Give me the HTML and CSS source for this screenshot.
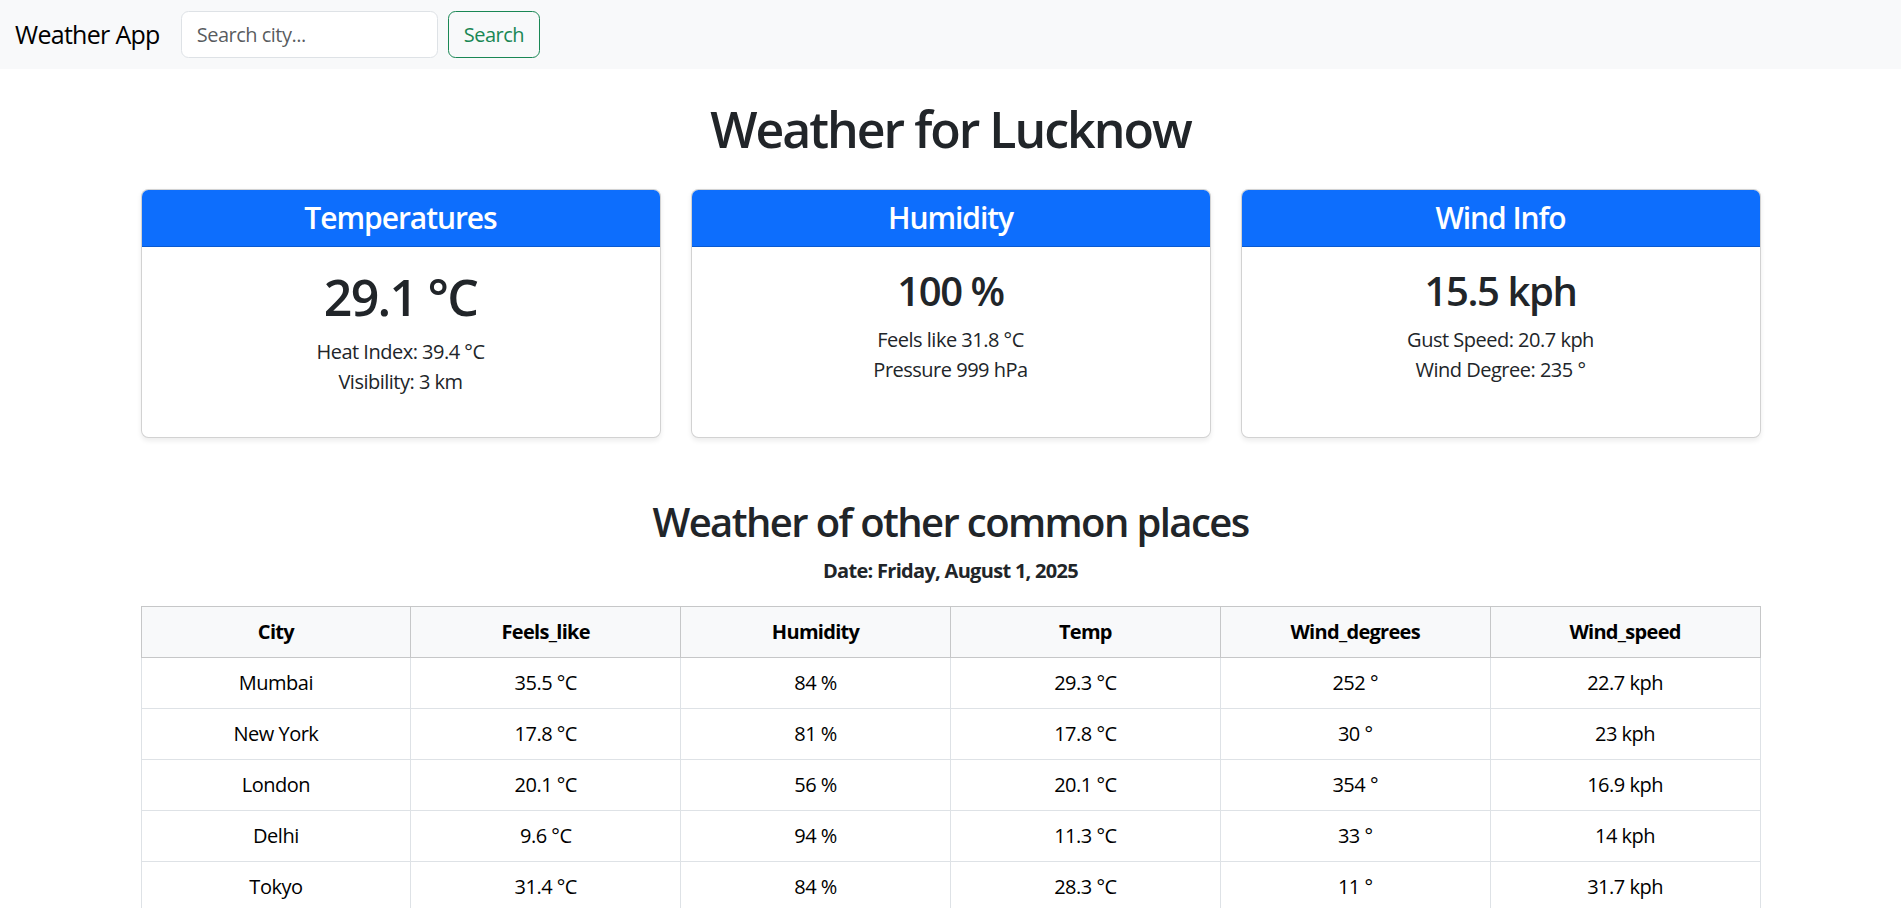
FILE: index.html
```html
<!DOCTYPE html>
<html lang="en">
<head>
<meta charset="utf-8">
<title>Weather App</title>
<link rel="stylesheet" href="styles.css">
</head>
<body>
<nav class="navbar">
  <a class="brand" href="#">Weather App</a>
  <form class="search">
    <input class="search-input" type="search" placeholder="Search city...">
    <button class="search-btn" type="button">Search</button>
  </form>
</nav>

<main class="container">
  <h1 class="page-title">Weather for Lucknow</h1>

  <div class="cards">
    <div class="card">
      <div class="card-header"><h4>Temperatures</h4></div>
      <div class="card-body">
        <h1 class="value-lg">29.1 °C</h1>
        <p class="details">Heat Index: 39.4 °C<br>Visibility: 3 km</p>
      </div>
    </div>
    <div class="card">
      <div class="card-header"><h4>Humidity</h4></div>
      <div class="card-body">
        <h2 class="value-md">100 %</h2>
        <p class="details">Feels like 31.8 °C<br>Pressure 999 hPa</p>
      </div>
    </div>
    <div class="card">
      <div class="card-header"><h4>Wind Info</h4></div>
      <div class="card-body">
        <h2 class="value-md">15.5 kph</h2>
        <p class="details">Gust Speed: 20.7 kph<br>Wind Degree: 235 °</p>
      </div>
    </div>
  </div>

  <h2 class="section-title">Weather of other common places</h2>
  <p class="date">Date: Friday, August 1, 2025</p>

  <table class="weather-table">
    <thead>
      <tr><th>City</th><th>Feels_like</th><th>Humidity</th><th>Temp</th><th>Wind_degrees</th><th>Wind_speed</th></tr>
    </thead>
    <tbody>
      <tr><td>Mumbai</td><td>35.5 °C</td><td>84 %</td><td>29.3 °C</td><td>252 °</td><td>22.7 kph</td></tr>
      <tr><td>New York</td><td>17.8 °C</td><td>81 %</td><td>17.8 °C</td><td>30 °</td><td>23 kph</td></tr>
      <tr><td>London</td><td>20.1 °C</td><td>56 %</td><td>20.1 °C</td><td>354 °</td><td>16.9 kph</td></tr>
      <tr><td>Delhi</td><td>9.6 °C</td><td>94 %</td><td>11.3 °C</td><td>33 °</td><td>14 kph</td></tr>
      <tr><td>Tokyo</td><td>31.4 °C</td><td>84 %</td><td>28.3 °C</td><td>11 °</td><td>31.7 kph</td></tr>
    </tbody>
  </table>
</main>
</body>
</html>
```

FILE: styles.css
```css
* { box-sizing: border-box; }

body {
  margin: 0;
  font-family: "Open Sans", "Noto Sans", sans-serif;
  font-size: 20px;
  line-height: 1.5;
  letter-spacing: -0.5px;
  color: #212529;
  background: #fff;
}

/* Navbar */
.navbar {
  display: flex;
  align-items: center;
  background: #f8f9fa;
  padding: 11px 15px;
}
.brand {
  font-size: 25px;
  line-height: 1.5;
  padding: 0;
  margin-right: 21px;
  letter-spacing: -0.7px;
  color: #000;
  text-decoration: none;
}
.search {
  display: flex;
  margin: 0;
}
.search-input {
  width: 257px;
  height: 47px;
  padding: 7px 15px;
  font: inherit;
  font-size: 20px;
  letter-spacing: -0.5px;
  color: #212529;
  background: #fff;
  border: 1px solid #dee2e6;
  border-radius: 7.5px;
  margin-right: 10px;
}
.search-input::placeholder { color: rgba(33, 37, 41, 0.75); }
.search-btn {
  height: 47px;
  padding: 7px 15px;
  font: inherit;
  font-size: 20px;
  letter-spacing: -0.5px;
  color: #198754;
  background: transparent;
  border: 1px solid #198754;
  border-radius: 7.5px;
}

/* Main */
.container {
  max-width: 1650px;
  margin: 0 auto;
  padding: 0 15px;
}
.page-title {
  margin: 30px 0;
  font-size: 50px;
  font-weight: 600;
  line-height: 1.2;
  letter-spacing: -0.04em;
  text-align: center;
}

.cards {
  display: grid;
  grid-template-columns: repeat(3, 1fr);
  gap: 30px;
}
.card {
  display: flex;
  flex-direction: column;
  background: #fff;
  border: 1px solid rgba(0, 0, 0, 0.175);
  border-radius: 7.5px;
  box-shadow: 0 2.5px 5px rgba(0, 0, 0, 0.075);
}
.card-header {
  background: #0d6efd;
  color: #fff;
  padding: 10px 20px;
  border-bottom: 1px solid rgba(0, 0, 0, 0.175);
  border-radius: 6.5px 6.5px 0 0;
  text-align: center;
}
.card-header h4 {
  margin: 0;
  font-size: 30px;
  font-weight: 600;
  line-height: 1.2;
  letter-spacing: -0.035em;
}
.card-body {
  flex: 1;
  padding: 20px;
  text-align: center;
}
.value-lg {
  margin: 0 0 10px;
  font-size: 50px;
  font-weight: 600;
  line-height: 1.2;
  letter-spacing: -0.035em;
}
.value-md {
  margin: 0 0 10px;
  font-size: 40px;
  font-weight: 600;
  line-height: 1.2;
  letter-spacing: -0.035em;
}
.details {
  margin: 0 0 20px;
}

.section-title {
  margin: 60px 0 10px;
  font-size: 40px;
  font-weight: 600;
  line-height: 1.2;
  letter-spacing: -0.04em;
  text-align: center;
}
.date {
  margin: 0 0 20px;
  font-weight: 700;
  letter-spacing: -0.7px;
  text-align: center;
}

/* Table */
.weather-table {
  width: 100%;
  table-layout: fixed;
  border-collapse: collapse;
  margin-bottom: 20px;
  color: #000;
}
.weather-table th,
.weather-table td {
  padding: 10px;
  border: 1px solid #dee2e6;
  text-align: center;
  font-weight: 400;
}
.weather-table th {
  background: #f8f9fa;
  border-color: #c6c7c8;
  font-weight: 700;
  letter-spacing: -0.7px;
}
```
